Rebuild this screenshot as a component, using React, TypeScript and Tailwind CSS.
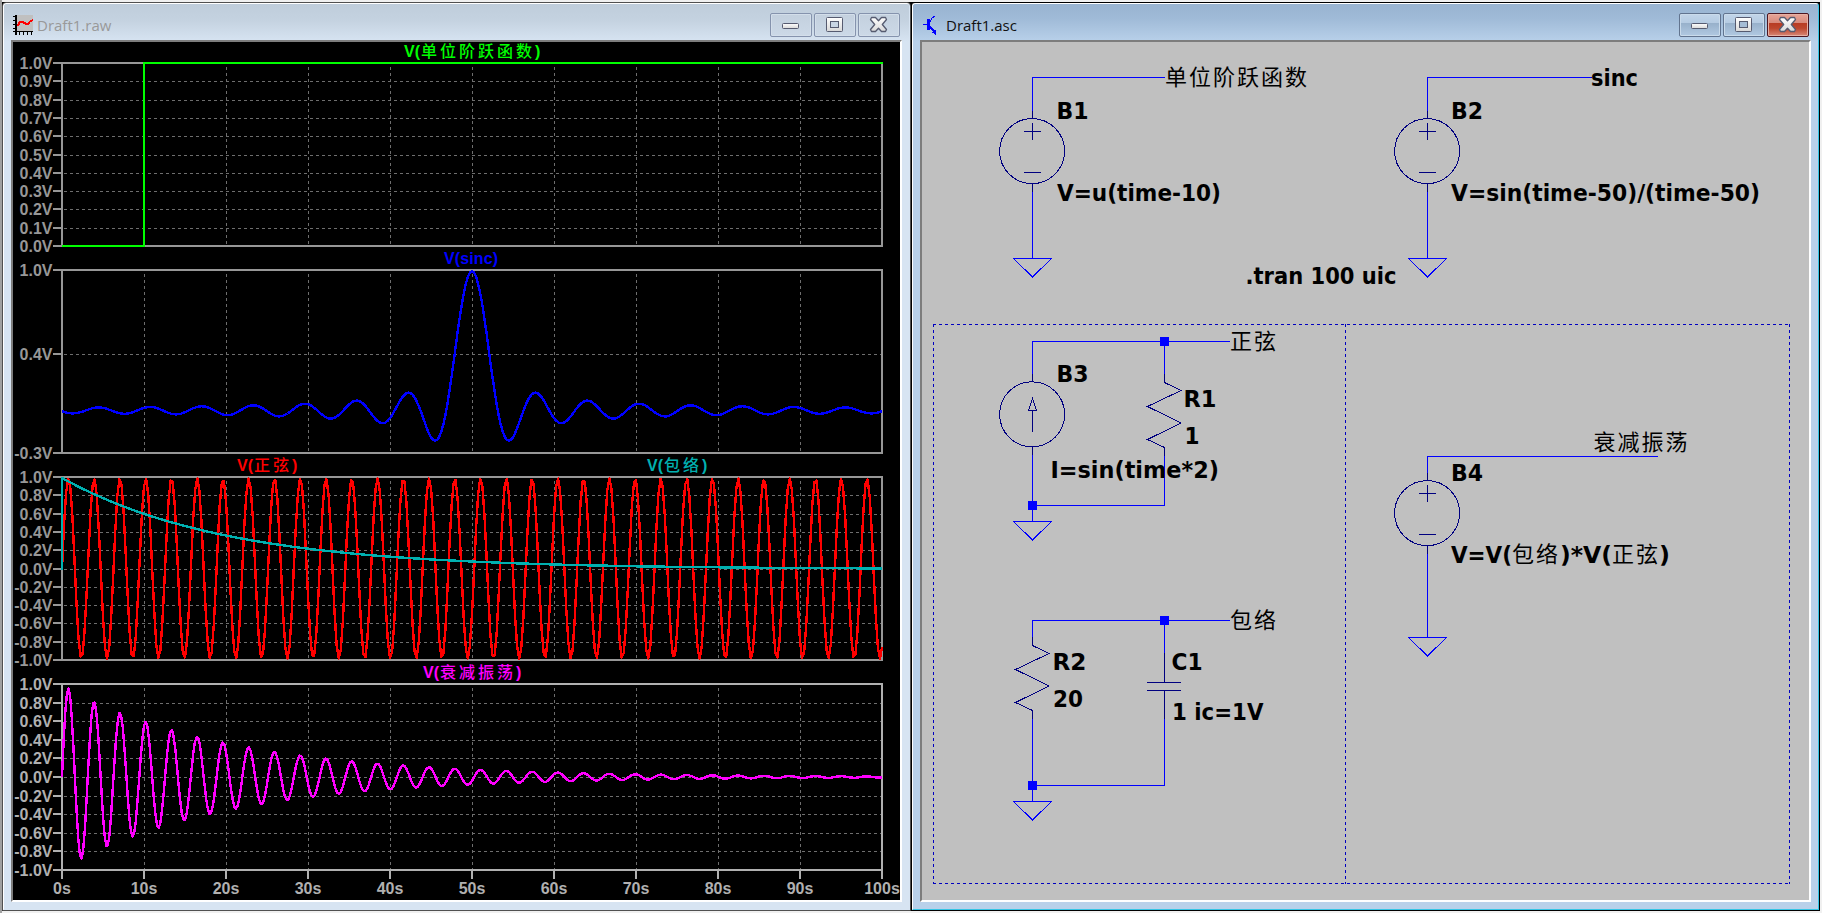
import React from 'react';

const LABEL_FONT = '"DejaVu Sans Condensed", "DejaVu Sans", "Noto Sans CJK SC", sans-serif';
const CJK_FONT = '"Noto Sans CJK SC", sans-serif';
const AXIS_FONT = '"Liberation Sans", "Noto Sans CJK SC", sans-serif';

/* ---------- waveform viewer ---------- */

const LEFT = 62;
const RIGHT = 882;
const timeX = (t: number) => LEFT + (t * (RIGHT - LEFT)) / 100;

function trace(f: (t: number) => number, y: (v: number) => number, step: number) {
  let d = '';
  for (let i = 0; i * step <= 100.0001; i++) {
    const t = i * step;
    d += `${i ? 'L' : 'M'}${timeX(t).toFixed(1)} ${y(f(t)).toFixed(1)}`;
  }
  return d;
}

type PaneProps = {
  top: number;
  bottom: number;
  ticks: [number, string][];
  color: string;
};

function Pane({ top, bottom, ticks, color }: PaneProps) {
  return (
    <g>
      <g stroke="#6e6e6e" strokeWidth="1" strokeDasharray="3 3" shapeRendering="crispEdges">
        {ticks
          .filter(([y]) => y !== top && y !== bottom)
          .map(([y]) => (
            <line key={y} x1={LEFT + 2} x2={RIGHT} y1={y + 0.5} y2={y + 0.5} />
          ))}
        {[1, 2, 3, 4, 5, 6, 7, 8, 9].map((i) => (
          <line key={i} x1={LEFT + 82 * i + 0.5} x2={LEFT + 82 * i + 0.5} y1={top + 4} y2={bottom} />
        ))}
      </g>
      <g stroke={color} strokeWidth="2" shapeRendering="crispEdges" fill="none">
        <rect x={LEFT} y={top} width={RIGHT - LEFT} height={bottom - top} />
        {ticks.map(([y]) => (
          <line key={y} x1="53" x2={LEFT} y1={y} y2={y} />
        ))}
      </g>
      <g fill={color} fontFamily={AXIS_FONT} fontWeight="700" fontSize="16" textAnchor="end">
        {ticks.map(([y, s]) => (
          <text key={y} x="52.500" y={y + 6}>
            {s}
          </text>
        ))}
      </g>
    </g>
  );
}

function TraceName({ x, y, latin, cjk, color }: { x: number; y: number; latin?: string; cjk?: string; color: string }) {
  if (latin) {
    return (
      <text x={x} y={y} fill={color} fontFamily={AXIS_FONT} fontWeight="700" fontSize="16" textLength="54">
        {`V(${latin})`}
      </text>
    );
  }
  const name = cjk ?? '';
  return (
    <g fill={color} fontFamily={AXIS_FONT} fontWeight="700" fontSize="16">
      <text x={x} y={y}>
        V(
      </text>
      <text x={x + 17} y={y - 0.5} fontFamily={CJK_FONT} fontWeight="500" letterSpacing="3">
        {name}
      </text>
      <text x={x + 17 + name.length * 19} y={y}>
        )
      </text>
    </g>
  );
}

const stepTicks: [number, string][] = [63, 81, 100, 118, 136, 155, 173, 191, 209, 228, 246].map((y, i) => [
  y,
  `${((10 - i) / 10).toFixed(1)}V`,
]);
const bipolar = (ys: number[]): [number, string][] => ys.map((y, i) => [y, `${((5 - i) / 5).toFixed(1)}V`]);
const sineTicks = bipolar([477, 495, 514, 532, 550, 569, 587, 605, 623, 642, 660]);
const decayTicks = bipolar([684, 703, 721, 740, 758, 777, 796, 814, 833, 851, 870]);

const sinc = (t: number) => (Math.abs(t - 50) < 1e-6 ? 1 : Math.sin(t - 50) / (t - 50));
const sincPath = trace(sinc, (v) => 410.5 - v * 139.5, 0.25);
const sinePath = trace((t) => Math.sin(2 * t), (v) => 568.5 - v * 90, 0.25);
const envelopePath = trace((t) => Math.exp(-t / 20), (v) => 569 - v * 91, 1);
const decayPath = trace((t) => Math.exp(-t / 20) * Math.sin(2 * t), (v) => 777 - v * 92, 0.2);

function Waveforms() {
  return (
    <svg className="block overflow-visible bg-black" width="887" height="858" viewBox="13 42 887 858">
      <Pane top={63} bottom={246} ticks={stepTicks} color="#979797" />
      <Pane
        top={270}
        bottom={453}
        ticks={[
          [270, '1.0V'],
          [354, '0.4V'],
          [453, '-0.3V'],
        ]}
        color="#979797"
      />
      <Pane top={477} bottom={660} ticks={sineTicks} color="#979797" />
      <Pane top={684} bottom={870} ticks={decayTicks} color="#b0b0b0" />
      <g stroke="#b0b0b0" strokeWidth="2" shapeRendering="crispEdges">
        {[0, 1, 2, 3, 4, 5, 6, 7, 8, 9, 10].map((i) => (
          <line key={i} x1={LEFT + 82 * i} x2={LEFT + 82 * i} y1="870" y2="879" />
        ))}
      </g>
      <g fill="#b0b0b0" fontFamily={AXIS_FONT} fontWeight="700" fontSize="16" textAnchor="middle">
        {[0, 1, 2, 3, 4, 5, 6, 7, 8, 9, 10].map((i) => (
          <text key={i} x={LEFT + 82 * i} y="894">
            {i * 10}s
          </text>
        ))}
      </g>
      <g fill="none" strokeWidth="2.4" strokeLinejoin="round" shapeRendering="crispEdges">
        <path d="M62 246H144V63H883" stroke="#00ff00" strokeWidth="2" strokeLinejoin="miter" />
        <path d={sincPath} stroke="#0000ff" />
        <path d={sinePath} stroke="#ff0000" />
        <path d={'M62 570V478' + envelopePath.replace('M', 'L')} stroke="#00b0b0" />
        <path d={decayPath} stroke="#ff00ff" />
      </g>
      <TraceName x={404} y={57} cjk="单位阶跃函数" color="#00ff00" />
      <TraceName x={444} y={264} latin="sinc" color="#0000ff" />
      <TraceName x={237} y={471} cjk="正弦" color="#ff0000" />
      <TraceName x={647} y={471} cjk="包络" color="#00b0b0" />
      <TraceName x={423} y={678} cjk="衰减振荡" color="#ff00ff" />
    </svg>
  );
}

/* ---------- schematic ---------- */

const WIRE = '#0000ff';
const SYMBOL = '#000080';

function Ground({ x, y }: { x: number; y: number }) {
  return <path d={`M${x - 18.5} ${y + 0.5}H${x + 19.5}L${x + 0.5} ${y + 19}Z`} stroke={WIRE} />;
}

function Node({ x, y }: { x: number; y: number }) {
  return <rect x={x - 4} y={y - 4} width="9" height="9" fill={WIRE} stroke="none" />;
}

function VoltageSource({ x, y }: { x: number; y: number }) {
  return (
    <g stroke={SYMBOL}>
      <circle cx={x + 0.1} cy={y + 0.1} r="32.5" />
      <path
        d={`M${x + 0.5} ${y - 40}V${y - 32}M${x + 0.5} ${y + 33}V${y + 41}M${x - 8} ${y - 19.5}H${x + 9}M${x + 0.5} ${y - 28}V${y - 11}M${x - 8} ${y + 21.5}H${x + 9}`}
      />
    </g>
  );
}

function Resistor({ x, y }: { x: number; y: number }) {
  return (
    <path
      stroke={SYMBOL}
      d={`M${x + 0.5} ${y - 8}V${y + 0.5}L${x + 17} ${y + 8.5}L${x - 16.5} ${y + 24.5}L${x + 17} ${y + 41}L${x - 16.5} ${y + 57.5}L${x + 0.5} ${y + 65.5}V${y + 74}`}
    />
  );
}

function Label({ x, y, w, children }: { x: number; y: number; w: number; children: string }) {
  return (
    <text x={x} y={y} textLength={w} lengthAdjust="spacingAndGlyphs" fontFamily={LABEL_FONT} fontWeight="700" fontSize="23">
      {children}
    </text>
  );
}

function CjkLabel({ x, y, children }: { x: number; y: number; children: string }) {
  return (
    <text x={x} y={y - 0.8} fontFamily={CJK_FONT} fontSize="22" letterSpacing="2">
      {children}
    </text>
  );
}

function Schematic() {
  return (
    <svg className="block bg-[#c0c0c0]" width="887" height="858" viewBox="922 42 887 858">
      <g stroke="#0000c0" strokeDasharray="3 3" fill="none" shapeRendering="crispEdges">
        <path d="M933 324.5H1790M933.5 324V884M933 883.5H1790M1789.5 324V884M1345.5 324V884" />
      </g>
      <g fill="none" strokeWidth="1" shapeRendering="crispEdges">
        <g stroke={WIRE}>
          <path d="M1032.5 111V77.5H1165M1032.5 192V258" />
          <path d="M1427.5 111V77.5H1592M1427.5 192V258" />
          <path d="M1427.5 473V456.5H1658M1427.5 554V637" />
          <path d="M1032.5 374V341.5H1230M1164.5 341V374M1032.5 455V521M1032 505.5H1164.5V455" />
          <path d="M1032.5 638V620.5H1230M1164.5 620V653M1032.5 719V801M1032 785.5H1164.5V719" />
        </g>
        <VoltageSource x={1032} y={151} />
        <VoltageSource x={1427} y={151} />
        <VoltageSource x={1427} y={513} />
        <g stroke={SYMBOL}>
          <circle cx="1032.1" cy="414.300" r="32.500" />
          <path d="M1032.5 374V382M1032.5 447V455M1032.5 411V432M1032.5 398.5L1036.5 410.5H1028.5Z" />
          <path d="M1164.5 653V682M1147 682.5H1181M1147 690.5H1181M1164.5 690V719" />
        </g>
        <Resistor x={1164} y={382} />
        <Resistor x={1032} y={645} />
        <Ground x={1032} y={258} />
        <Ground x={1427} y={258} />
        <Ground x={1427} y={637} />
        <Ground x={1032} y={521} />
        <Ground x={1032} y={801} />
        <Node x={1164} y={341} />
        <Node x={1032} y={505} />
        <Node x={1164} y={620} />
        <Node x={1032} y={785} />
      </g>
      <g fill="#000">
        <CjkLabel x={1165} y={86}>单位阶跃函数</CjkLabel>
        <Label x={1056.5} y={119} w={32}>B1</Label>
        <Label x={1057} y={201} w={164}>V=u(time-10)</Label>
        <Label x={1591} y={85.5} w={47}>sinc</Label>
        <Label x={1451} y={119} w={32}>B2</Label>
        <Label x={1451} y={201} w={309}>V=sin(time-50)/(time-50)</Label>
        <Label x={1245.5} y={284} w={151}>.tran 100 uic</Label>
        <CjkLabel x={1230} y={350}>正弦</CjkLabel>
        <Label x={1056.5} y={381.5} w={32}>B3</Label>
        <Label x={1183.5} y={407} w={33}>R1</Label>
        <Label x={1184.5} y={444} w={15}>1</Label>
        <Label x={1050.5} y={477.5} w={168.5}>I=sin(time*2)</Label>
        <CjkLabel x={1230} y={629}>包络</CjkLabel>
        <Label x={1052.5} y={670} w={34}>R2</Label>
        <Label x={1053} y={707} w={30}>20</Label>
        <Label x={1171.5} y={670} w={31}>C1</Label>
        <Label x={1172} y={720} w={91.5}>1 ic=1V</Label>
        <CjkLabel x={1593.5} y={451}>衰减振荡</CjkLabel>
        <Label x={1451} y={481} w={32}>B4</Label>
        <Label x={1451} y={563} w={61}>V=V(</Label>
        <CjkLabel x={1512} y={563}>包络</CjkLabel>
        <Label x={1560} y={563} w={52}>)*V(</Label>
        <CjkLabel x={1612} y={563}>正弦</CjkLabel>
        <Label x={1659} y={563} w={11}>)</Label>
      </g>
    </svg>
  );
}

/* ---------- window chrome ---------- */

function RawIcon() {
  return (
    <svg width="20" height="20" viewBox="0 0 20 20" shapeRendering="crispEdges">
      <rect x="4" width="16" height="16" fill="#c0c0c0" />
      <path d="M2 0h2v20h-2zM0 1h2v1h-2zM0 5h2v1h-2zM0 9h2v1h-2zM0 13h2v1h-2zM0 16h20v1h-20zM6 17h1v3h-1zM10 17h1v3h-1zM14 17h1v3h-1zM18 17h1v3h-1z" fill="#000" />
      <path d="M4.500 11L7 7H10L13 9H15L17 6.500L20 5" stroke="#f00" strokeWidth="2" fill="none" />
    </svg>
  );
}

function AscIcon() {
  return (
    <svg width="20" height="20" viewBox="0 0 20 20" shapeRendering="crispEdges">
      <path d="M1 9.500H5M8 7L10 3L13.500 .5" stroke="#00f" fill="none" />
      <path d="M5 4H7.500V15H5Z" fill="#00f" />
      <path d="M7 11L13 17.500" stroke="#00f" strokeWidth="2" />
      <path d="M14 15V20L9.500 17Z" fill="#00f" />
    </svg>
  );
}

type Glyph = 'min' | 'max' | 'close';

function CaptionGlyph({ kind, active }: { kind: Glyph; active: boolean }) {
  const edge = '#565b70';
  return (
    <svg width="20" height="18" viewBox="0 0 20 18">
      <defs>
        <linearGradient id="glyphFill" x1="0" y1="0" x2="0" y2="1">
          <stop offset="0" stopColor="#fff" />
          <stop offset="1" stopColor="#d8d8d8" />
        </linearGradient>
      </defs>
      {kind === 'min' && <rect x="1.500" y="7.500" width="16" height="5" rx="1" fill="url(#glyphFill)" stroke={edge} />}
      {kind === 'max' && (
        <g stroke={edge}>
          <rect x="1.500" y="1.500" width="16" height="14" rx="1" fill="url(#glyphFill)" />
          <rect x="5.500" y="5.500" width="8" height="6" fill={active ? '#a5bdd6' : '#c9d6e4'} />
        </g>
      )}
      {kind === 'close' && (
        <path
          d="M2.500 1.500H6.500L9.500 4.800L12.500 1.500H16.500L17.500 3.500L13.300 8.500L17.500 13.500L16.500 15.500H12.500L9.500 12.200L6.500 15.500H2.500L1.500 13.500L5.700 8.500L1.500 3.500Z"
          fill="url(#glyphFill)"
          stroke={edge}
          strokeWidth="1.3"
          strokeLinejoin="round"
        />
      )}
    </svg>
  );
}

function CaptionButton({ kind, active }: { kind: Glyph; active: boolean }) {
  let skin = 'border-[#8593ad] bg-linear-to-b from-[#c3d0de] to-[#ccd9e7] shadow-[inset_0_0_0_1px_#d3deea]';
  if (active) {
    skin =
      kind === 'close'
        ? 'border-[#4d1520] bg-[linear-gradient(#e8a598_0%,#d6887a_42%,#b83c24_43%,#bd472e_65%,#d88878_100%)] shadow-[inset_0_0_0_1px_#e6b0a4]'
        : 'border-[#62748f] bg-[linear-gradient(#c2d5e9_0%,#b5cbe2_42%,#98b1cb_43%,#b1c9e2_100%)] shadow-[inset_0_0_0_1px_#cadbeb]';
  }
  return (
    <button className={`flex h-6 w-[42px] items-center justify-center rounded-[2px] border ${skin}`} aria-label={kind}>
      <CaptionGlyph kind={kind} active={active} />
    </button>
  );
}

type WindowProps = {
  title: string;
  icon: React.ReactNode;
  active?: boolean;
  children: React.ReactNode;
};

function MdiWindow({ title, icon, active = false, children }: WindowProps) {
  const outer = active ? 'border-black' : 'border-[#505050]';
  const inner = active
    ? 'border-t-white border-l-white border-r-[#35c5e5] border-b-[#35c5e5] bg-[linear-gradient(#99b4d1_0px,#9fbad7_14px,#b9d1ea_38px,#b9d1ea_100%)]'
    : 'border-t-white border-l-white border-r-[#d7e4f2] border-b-[#d7e4f2] bg-[linear-gradient(#bfcddb_0px,#c4d2e0_16px,#d7e4f2_38px,#d7e4f2_100%)]';
  return (
    <section className={`h-[909px] w-[909px] rounded-t-[4px] border bg-black ${outer}`}>
      <div className={`flex h-full flex-col rounded-t-[3px] border px-[7px] pb-[7px] ${inner}`}>
        <header className="flex h-9 items-start pr-[2px] pl-[2px]">
          <div className="mt-[11px] h-5 w-5">{icon}</div>
          <h1
            className={`mt-[11px] ml-1 flex-1 font-['Open_Sans','Noto_Sans',sans-serif] text-[15px] leading-5 ${active ? 'text-[#111]' : 'text-[#999]'}`}
          >
            {title}
          </h1>
          <div className="mt-[9px] flex gap-[2px]">
            <CaptionButton kind="min" active={active} />
            <CaptionButton kind="max" active={active} />
            <CaptionButton kind="close" active={active} />
          </div>
        </header>
        <div className="border-2 border-t-[#7d7d7d] border-r-white border-b-white border-l-[#7d7d7d]">{children}</div>
      </div>
    </section>
  );
}

export default function App() {
  return (
    <main className="flex h-[913px] w-[1822px] overflow-hidden border-l-2 border-l-[#a0a0a0] bg-[#f0f0f0] pt-[2px]">
      <div className="flex h-[909px] bg-black">
        <MdiWindow title="Draft1.raw" icon={<RawIcon />}>
          <Waveforms />
        </MdiWindow>
        <MdiWindow title="Draft1.asc" icon={<AscIcon />} active>
          <Schematic />
        </MdiWindow>
      </div>
    </main>
  );
}
